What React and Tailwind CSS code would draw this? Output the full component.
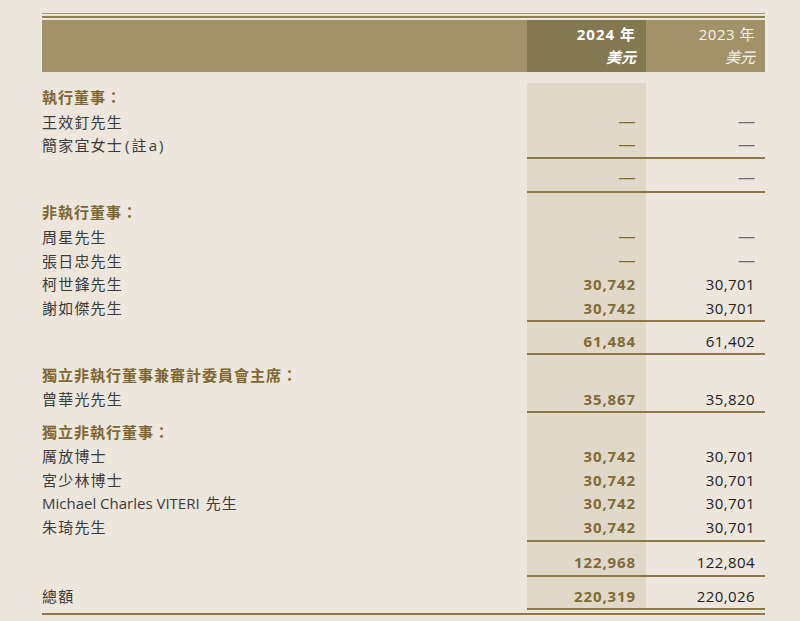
import React from "react";

const FONT = {
    fontFamily: '"Open Sans", "Noto Sans CJK TC", "Noto Sans", sans-serif',
};

// em dash drawn in a font whose dash fills the em
function Dash({ className }) {
    return (
        <span className={`font-['Liberation_Sans'] text-[16px] ${className}`}>—</span>
    );
}

// one table row: label | 2024 (shaded) | 2023
function Row({ label, head, v24, v23, h, pt = "" }) {
    return (
        <div className={`grid grid-cols-[485px_119px_119px] ${h}`}>
            <div
                className={`flex items-center ${pt} ${
                    head
                        ? "font-bold text-[#7e6733] tracking-[1px]"
                        : "text-[#3b3b3b] tracking-[1.2px]"
                } text-[15px]`}
            >
                {label}
            </div>

            <div
                className={`flex items-center justify-end pr-[10px] bg-[#e0d9ca] ${pt} text-[15px] font-bold text-[#806a35] tracking-[0.9px]`}
            >
                {v24 === "—" ? <Dash className="font-normal text-[#85692c]" /> : v24}
            </div>

            <div
                className={`flex items-center justify-end pr-[10px] ${pt} text-[15px] text-[#222] tracking-[0.4px]`}
            >
                {v23 === "—" ? <Dash className="text-[#6b6b6b]" /> : v23}
            </div>
        </div>
    );
}

// rule across the two number columns
function Rule() {
    return (
        <div className="grid grid-cols-[485px_238px]">
            <div />
            <div className="h-[2px] bg-[#8e7847]" />
        </div>
    );
}

export default function App() {
    return (
        <div
            className="w-[800px] h-[621px] bg-[#ece6dc] overflow-hidden"
            style={FONT}
        >
            <div className="ml-[42px] w-[723px] pt-[13px]">

                {/* TOP DOUBLE RULE */}
                <div className="h-px bg-[#a89873]" />
                <div className="h-[2px]" />
                <div className="h-[2px] bg-[#8f7e55]" />
                <div className="h-[2px]" />

                {/* HEADER BAND */}
                <div className="grid grid-cols-[485px_119px_119px] h-[52px] bg-[#a39269]">
                    <div />
                    <div className="bg-[#837852] flex flex-col items-end justify-center pr-[10px] text-white leading-[23px]">
                        <span className="font-bold text-[15px] tracking-[1px]">2024 年</span>
                        <span className="font-bold italic text-[15px]">美元</span>
                    </div>
                    <div className="flex flex-col items-end justify-center pr-[10px] text-[#f7f2e7] leading-[23px]">
                        <span className="text-[15px] tracking-[0.5px]">2023 年</span>
                        <span className="italic text-[15px]">美元</span>
                    </div>
                </div>

                <div className="h-[11px]" />

                {/* EXECUTIVE DIRECTORS */}
                <Row head label="執行董事：" h="h-[27px]" pt="pt-[2px]" />
                <Row label="王效釘先生" v24="—" v23="—" h="h-[23px]" />
                <Row
                    label={<>簡家宜女士<span className="ml-[2px] tracking-[2px]">(</span>註<span className="ml-[1px] tracking-[2px]">a)</span></>}
                    v24="—"
                    v23="—"
                    h="h-[24px]"
                />
                <Rule />
                <Row v24="—" v23="—" h="h-[32px]" pt="pt-[6px]" />
                <Rule />

                {/* NON-EXECUTIVE DIRECTORS */}
                <Row head label="非執行董事：" h="h-[32px]" pt="pt-[6px]" />
                <Row label="周星先生" v24="—" v23="—" h="h-[24px]" />
                <Row label="張日忠先生" v24="—" v23="—" h="h-[23px]" />
                <Row label="柯世鋒先生" v24="30,742" v23="30,701" h="h-[24px]" />
                <Row label="謝如傑先生" v24="30,742" v23="30,701" h="h-[24px]" />
                <Rule />
                <Row v24="61,484" v23="61,402" h="h-[31px]" pt="pt-[7px]" />
                <Rule />

                {/* AUDIT COMMITTEE CHAIRMAN */}
                <Row head label="獨立非執行董事兼審計委員會主席：" h="h-[33px]" pt="pt-[8px]" />
                <Row label="曾華光先生" v24="35,867" v23="35,820" h="h-[23px]" />
                <Rule />

                {/* INDEPENDENT NON-EXECUTIVE DIRECTORS */}
                <Row head label="獨立非執行董事：" h="h-[32px]" pt="pt-[6px]" />
                <Row label="厲放博士" v24="30,742" v23="30,701" h="h-[23px]" />
                <Row label="宮少林博士" v24="30,742" v23="30,701" h="h-[24px]" />
                <Row
                    label={<><span className="tracking-normal mr-[6px]">Michael Charles VITERI</span>先生</>}
                    v24="30,742"
                    v23="30,701"
                    h="h-[23px]"
                />
                <Row label="朱琦先生" v24="30,742" v23="30,701" h="h-[25px]" />
                <Rule />
                <Row v24="122,968" v23="122,804" h="h-[33px]" pt="pt-[7px]" />
                <Rule />

                {/* TOTAL */}
                <Row label="總額" v24="220,319" v23="220,026" h="h-[31px]" pt="pt-[8px]" />
                <Rule />
                <div className="h-[3px]" />
                <div className="h-[2px] bg-[#8e7847]" />

            </div>
        </div>
    );
}
